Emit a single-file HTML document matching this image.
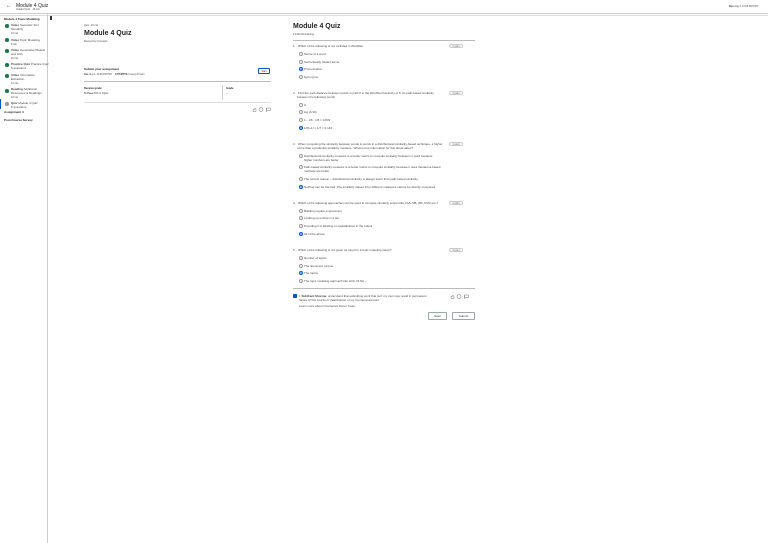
<!DOCTYPE html>
<html><head><meta charset="utf-8"><style>
*{margin:0;padding:0;box-sizing:border-box}
body{width:768px;height:543px;background:#fff;font-family:"Liberation Sans",sans-serif;color:#1f1f1f;position:relative;overflow:hidden}
.a{position:absolute;white-space:nowrap}
.t{font-size:3px;color:#444}
.b{font-weight:bold;color:#1f1f1f}
.r{position:absolute;width:4px;height:4px;border:0.5px solid #999;border-radius:50%}
.r.s{border-color:#0056d2;background:radial-gradient(#0056d2 45%,#fff 55%)}
.pt{position:absolute;left:449px;width:14px;height:4px;border:0.5px solid #ccc;border-radius:2px;font-size:2.4px;text-align:center;line-height:3px;color:#555}
.dot{position:absolute;width:3.5px;height:3.5px;border-radius:50%;background:#1b7a4a}
.btn{position:absolute;height:8px;border:0.6px solid #9aa;border-radius:1px;font-size:3px;text-align:center;line-height:7px;color:#333;background:#fff}
</style></head><body>
<div class="a" style="left:0;top:13px;width:768px;height:1px;background:#ccc"></div>
<div class="a" style="left:0;top:15px;width:768px;height:0.6px;background:#ddd"></div>
<div class="a" style="left:6px;top:3px;font-size:6px;color:#444">&#8592;</div>
<div class="a" style="left:16px;top:3px;font-size:5px">Module 4 Quiz</div>
<div class="a t" style="left:16px;top:8px;font-size:2.5px">Graded Quiz · 15 min</div>
<div class="a t" style="left:729px;top:5px;font-size:2.5px"><b>Due</b> Aug 4, 11:59 PM PDT</div>
<div class="a" style="left:47px;top:14px;width:0.8px;height:529px;background:#ccc"></div>
<div class="a" style="left:50px;top:16px;width:2px;height:4px;background:#333"></div>
<div class="a t b" style="left:4px;top:17px;font-size:3px">Module 4 Topic Modeling</div>
<div class="dot" style="left:5px;top:24px"></div><div class="a t" style="left:11px;top:23px"><b>Video</b> Semantic Text<br>Similarity<br><span style="font-size:2.4px">10 min</span></div>
<div class="dot" style="left:5px;top:38px"></div><div class="a t" style="left:11px;top:38px"><b>Video</b> Topic Modeling<br><span style="font-size:2.4px">8 min</span></div>
<div class="dot" style="left:5px;top:49px"></div><div class="a t" style="left:11px;top:48px"><b>Video</b> Generative Models<br>and LDA<br><span style="font-size:2.4px">16 min</span></div>
<div class="dot" style="left:5px;top:63px"></div><div class="a t" style="left:11px;top:62px"><b>Practice Quiz</b> Practice Quiz<br>5 questions</div>
<div class="dot" style="left:5px;top:74px"></div><div class="a t" style="left:11px;top:73px"><b>Video</b> Information<br>Extraction<br><span style="font-size:2.4px">14 min</span></div>
<div class="dot" style="left:5px;top:89px"></div><div class="a t" style="left:11px;top:87px"><b>Reading</b> Additional<br>Resources &amp; Readings<br><span style="font-size:2.4px">10 min</span></div>
<div class="a" style="left:0;top:99px;width:1px;height:10px;background:#0056d2"></div>
<div class="dot" style="left:5px;top:102px;background:#999"></div><div class="a t" style="left:11px;top:101px"><b>Quiz</b> Module 4 Quiz<br>5 questions</div>
<div class="a t b" style="left:4px;top:110px">Assignment 4</div>
<div class="a t b" style="left:4px;top:118px">Post-Course Survey</div>

<div class="a t" style="left:84px;top:24px;font-size:2.4px">Quiz · 15 min</div>
<div class="a" style="left:84px;top:30px;font-size:7px;font-weight:bold">Module 4 Quiz</div>
<div class="a t" style="left:84px;top:40px;font-size:2.4px">Review Key Concepts</div>
<div class="a t b" style="left:84px;top:67px;font-size:3px">Submit your assignment</div>
<div class="a t" style="left:84px;top:73px;font-size:2.4px"><b>Due</b> Aug 4, 11:59 PM PDT &nbsp;&nbsp;&nbsp;<b>ATTEMPTS</b> 3 every 8 hours</div>
<div class="btn" style="left:258px;top:68px;width:12px;height:6px;line-height:5px;font-size:2.4px;border-color:#0056d2">Start</div>
<div class="a" style="left:84px;top:81px;width:187px;height:0.6px;background:#bbb"></div>
<div class="a t b" style="left:84px;top:87px;font-size:2.6px">Receive grade</div>
<div class="a t" style="left:84px;top:92px;font-size:2.4px"><b>To Pass</b> 80% or higher</div>
<div class="a" style="left:222px;top:85px;width:0.6px;height:15px;background:#ccc"></div>
<div class="a t b" style="left:226px;top:87px;font-size:2.6px">Grade</div>
<div class="a t" style="left:226px;top:92px;font-size:2.4px">—</div>
<div class="a" style="left:84px;top:102px;width:187px;height:1px;background:#ddd"></div>
<svg class="a" style="left:252px;top:107px" width="20" height="5" viewBox="0 0 20 5" fill="none" stroke="#777" stroke-width="0.5"><path d="M1 4.5h3V2.5L3 1 2.5 2.5H1z"/><circle cx="9" cy="2.5" r="2"/><path d="M14.5 1h4v2.5h-4zM14.5 1v4"/></svg>

<div class="a" style="left:293px;top:23px;font-size:7px;font-weight:bold">Module 4 Quiz</div>
<div class="a t" style="left:293px;top:33px;font-size:2.6px">14 Min Remaining</div>
<div class="a" style="left:293px;top:40px;width:182px;height:0.6px;background:#bbb"></div>

<div class="a t" style="left:293px;top:44px">1. &nbsp;&nbsp;Which of the following is not included in WordNet</div><div class="pt" style="top:44px">1 point</div>
<div class="r" style="left:299px;top:52px"></div><div class="a t" style="left:304px;top:52px">Sense of a word</div>
<div class="r" style="left:299px;top:60px"></div><div class="a t" style="left:304px;top:60px">Semantically related items</div>
<div class="r s" style="left:299px;top:67px"></div><div class="a t" style="left:304px;top:67px">Pronunciation</div>
<div class="r" style="left:299px;top:75px"></div><div class="a t" style="left:304px;top:75px">Synonyms</div>

<div class="a t" style="left:293px;top:91px">2. &nbsp;&nbsp;Find the path distance between words in path 6 in the WordNet hierarchy of 6. Its path-based similarity<br>&nbsp;&nbsp;&nbsp;&nbsp;&nbsp;between the following words</div><div class="pt" style="top:91px">1 point</div>
<div class="r" style="left:299px;top:103px"></div><div class="a t" style="left:304px;top:103px">0</div>
<div class="r" style="left:299px;top:110px"></div><div class="a t" style="left:304px;top:110px">log (1/10)</div>
<div class="r" style="left:299px;top:118px"></div><div class="a t" style="left:304px;top:118px">1 - 1/6 · 1/6 = 0.833</div>
<div class="r s" style="left:299px;top:126px"></div><div class="a t" style="left:304px;top:126px">1/(6+1) = 1/7 = 0.143</div>

<div class="a t" style="left:293px;top:142px">3. &nbsp;&nbsp;When computing the similarity between words in words in a distributional similarity-based technique, a higher<br>&nbsp;&nbsp;&nbsp;&nbsp;&nbsp;score than a particular similarity measure. What is true information for this observation?</div><div class="pt" style="top:142px">1 point</div>
<div class="r" style="left:299px;top:154px"></div><div class="a t" style="left:304px;top:154px">Distributional similarity measure is a better metric to compute similarity between in word because<br>higher numbers are better</div>
<div class="r" style="left:299px;top:165px"></div><div class="a t" style="left:304px;top:165px">Path-based similarity measure is a better metric to compute similarity because it uses thesaurus-based<br>methods are better</div>
<div class="r" style="left:299px;top:177px"></div><div class="a t" style="left:304px;top:177px">The correct reason – distributional similarity is always lower than path-based similarity</div>
<div class="r s" style="left:299px;top:185px"></div><div class="a t" style="left:304px;top:185px">Nothing can be inferred. The similarity values from different measures cannot be directly compared</div>

<div class="a t" style="left:293px;top:201px">4. &nbsp;&nbsp;Which of the following approaches can be used to compute similarity scores like LSA, NB, (RF, PMI) etc.?</div><div class="pt" style="top:201px">1 point</div>
<div class="r" style="left:299px;top:209px"></div><div class="a t" style="left:304px;top:209px">Building regular expressions</div>
<div class="r" style="left:299px;top:216px"></div><div class="a t" style="left:304px;top:216px">Looking up entries in a list</div>
<div class="r" style="left:299px;top:224px"></div><div class="a t" style="left:304px;top:224px">Providing it to labeling or capitalization in the output</div>
<div class="r s" style="left:299px;top:232px"></div><div class="a t" style="left:304px;top:232px">All of the above</div>

<div class="a t" style="left:293px;top:248px">5. &nbsp;&nbsp;Which of the following is not given as input for a topic modeling setup?</div><div class="pt" style="top:248px">1 point</div>
<div class="r" style="left:299px;top:256px"></div><div class="a t" style="left:304px;top:256px">Number of topics</div>
<div class="r" style="left:299px;top:264px"></div><div class="a t" style="left:304px;top:264px">The document corpus</div>
<div class="r s" style="left:299px;top:271px"></div><div class="a t" style="left:304px;top:271px">The topics</div>
<div class="r" style="left:299px;top:279px"></div><div class="a t" style="left:304px;top:279px">The topic modeling approach like LDA, PLSA ...</div>

<div class="a" style="left:293px;top:288px;width:182px;height:0.6px;background:#bbb"></div>
<div class="a" style="left:293px;top:294px;width:4px;height:4px;background:#0056d2;border-radius:0.6px"></div>
<div class="a t" style="left:299px;top:294px">I, <b>Siddhant Sharma</b>, understand that submitting work that isn't my own may result in permanent<br>failure of this course or deactivation of my Coursera account.</div>
<div class="a t" style="left:299px;top:304px">Learn more about Coursera's Honor Code</div>
<svg class="a" style="left:450px;top:294px" width="20" height="5" viewBox="0 0 20 5" fill="none" stroke="#777" stroke-width="0.5"><path d="M1 4.5h3V2.5L3 1 2.5 2.5H1z"/><circle cx="9" cy="2.5" r="2"/><path d="M14.5 1h4v2.5h-4zM14.5 1v4"/></svg>
<div class="btn" style="left:428px;top:312px;width:19px">Save</div>
<div class="btn" style="left:452px;top:312px;width:23px">Submit</div>
</body></html>
